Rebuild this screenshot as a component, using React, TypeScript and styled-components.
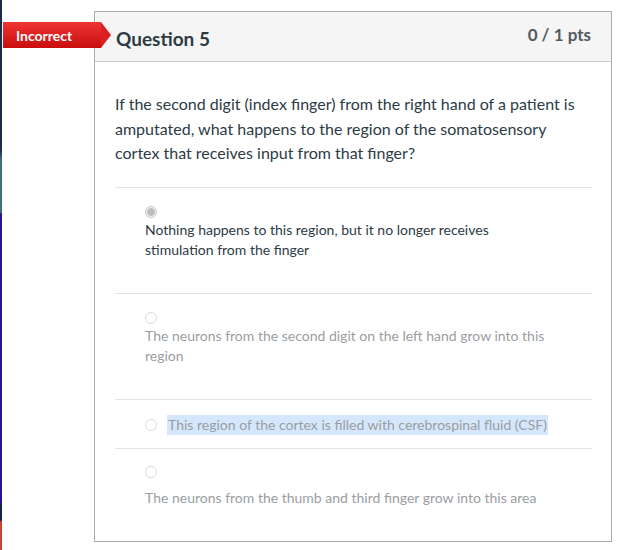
import styled, { createGlobalStyle } from "styled-components";

const GlobalStyle = createGlobalStyle`
  html, body {
    margin: 0;
    padding: 0;
    background: #fff;
  }
  body {
    font-family: Lato, "Open Sans", "Liberation Sans", sans-serif;
  }
`;

const Page = styled.div`
  display: flex;
  width: 621px;
  height: 550px;
  overflow: hidden;
  background: #fff;
`;

const EdgeStrip = styled.div`
  width: 2px;
  flex: none;
  background: linear-gradient(
    to bottom,
    #1c2a4c 0px,
    #1c2a4c 150px,
    #3d7381 160px,
    #3d7381 212px,
    #2a1296 214px,
    #2a1296 500px,
    #14213f 506px,
    #14213f 520px,
    #c4462c 522px,
    #c4462c 550px
  );
`;

const Main = styled.div`
  flex: 1;
  padding: 11px 0 0 92px;
`;

const Card = styled.div`
  position: relative;
  width: 518px;
  box-sizing: border-box;
  border: 1px solid #ababab;
  background: #fff;
`;

const Badge = styled.div`
  position: absolute;
  left: -92px;
  top: 10px;
  width: 98px;
  height: 26px;
  box-sizing: border-box;
  padding-left: 13px;
  display: flex;
  align-items: center;
  color: #fff;
  font-size: 14px;
  font-weight: 700;
  background: linear-gradient(to bottom, #f03434, #c80d0d);
  &::after {
    content: "";
    position: absolute;
    right: -10px;
    top: 0;
    border-top: 13px solid transparent;
    border-bottom: 13px solid transparent;
    border-left: 10px solid #dc2020;
  }
`;

const Header = styled.div`
  display: flex;
  justify-content: space-between;
  align-items: flex-start;
  height: 49px;
  padding: 0 20px 0 21px;
  background: #f5f5f5;
  border-bottom: 1px solid #c7cdd1;
`;

const Title = styled.h2`
  margin: 15px 0 0;
  font-size: 19px;
  line-height: 24px;
  font-weight: 700;
  color: #2d3b45;
`;

const Points = styled.div`
  margin-top: 13px;
  font-size: 17px;
  line-height: 20px;
  font-weight: 700;
  color: #555b60;
`;

const Body = styled.div`
  padding: 30px 19px 0 20px;
`;

const QuestionText = styled.p`
  margin: 0 0 21px;
  font-size: 16px;
  line-height: 24.5px;
  color: #2d3b45;
`;

const Answer = styled.div<{ $inline?: boolean; $gap?: number; $last?: boolean }>`
  border-top: 1px solid #e1e3e5;
  padding: ${(p) => (p.$inline ? "15px 0 13px 30px" : "17px 0 33px 30px")};
  display: flex;
  flex-direction: ${(p) => (p.$inline ? "row" : "column")};
  align-items: flex-start;
  gap: ${(p) => p.$gap ?? 2}px;
  padding-top: ${(p) => (p.$inline ? 15 : p.$last ? 17 : 18)}px;
`;

const Radio = styled.span<{ $checked?: boolean; $inline?: boolean }>`
  display: block;
  width: 12px;
  height: 12px;
  box-sizing: border-box;
  border-radius: 50%;
  flex: none;
  margin-top: ${(p) => (p.$inline ? 4 : 0)}px;
  border: 1px solid ${(p) => (p.$checked ? "#c9c9c9" : "#dcdcdc")};
  background: ${(p) =>
    p.$checked
      ? "radial-gradient(circle, #bdbdbd 0, #bdbdbd 3.6px, #f2f2f2 4.2px)"
      : "#fff"};
`;

const AnswerText = styled.div<{ $muted?: boolean; $highlight?: boolean }>`
  width: 405px;
  font-size: 14px;
  line-height: 20px;
  color: ${(p) => (p.$muted ? "#9a9ea2" : "#2d3b45")};
  ${(p) =>
    p.$highlight &&
    `
    width: auto;
    margin-left: 10px;
    padding: 0 1px;
    background: #d5e7fc;
  `}
`;

export default function App() {
  return (
    <Page>
      <GlobalStyle />
      <EdgeStrip />
      <Main>
        <Card>
          <Badge>Incorrect</Badge>
          <Header>
            <Title>Question 5</Title>
            <Points>0 / 1 pts</Points>
          </Header>
          <Body>
            <QuestionText>
              If the second digit (index finger) from the right hand of a patient is
              amputated, what happens to the region of the somatosensory cortex that
              receives input from that finger?
            </QuestionText>
            <Answer>
              <Radio $checked />
              <AnswerText>
                Nothing happens to this region, but it no longer receives stimulation
                from the finger
              </AnswerText>
            </Answer>
            <Answer>
              <Radio />
              <AnswerText $muted>
                The neurons from the second digit on the left hand grow into this region
              </AnswerText>
            </Answer>
            <Answer $inline $gap={0}>
              <Radio $inline />
              <AnswerText $muted $highlight>
                This region of the cortex is filled with cerebrospinal fluid (CSF)
              </AnswerText>
            </Answer>
            <Answer $gap={10} $last>
              <Radio />
              <AnswerText $muted>
                The neurons from the thumb and third finger grow into this area
              </AnswerText>
            </Answer>
          </Body>
        </Card>
      </Main>
    </Page>
  );
}
